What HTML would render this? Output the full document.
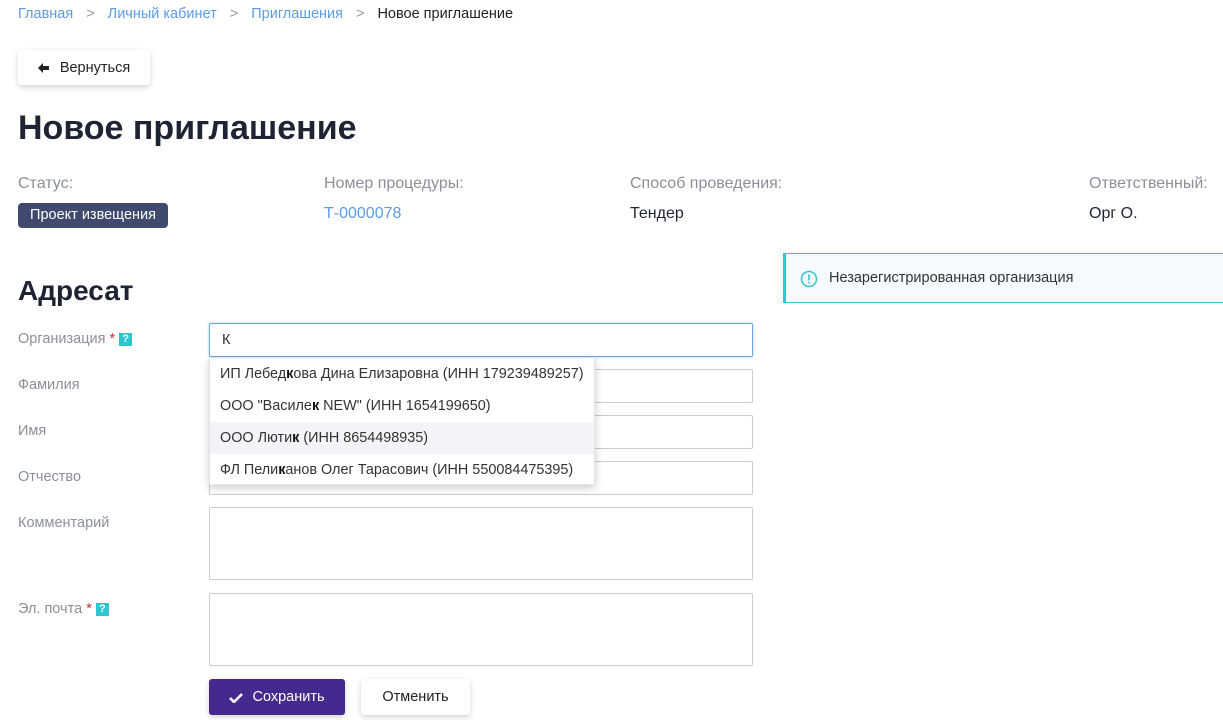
<!DOCTYPE html>
<html><head><meta charset="utf-8"><style>
*{box-sizing:border-box;margin:0;padding:0}
body{width:1223px;height:720px;overflow:hidden;background:#fff;font-family:"Liberation Sans",sans-serif;font-size:14px;color:#1e2433;position:relative}
.a{position:absolute;white-space:nowrap}
.bc{top:6px;left:18px;color:#5b9be6;font-size:14.5px}
.bc span.s{color:#999;margin:0 13px}
.bc span.c{color:#222}
.btn{position:absolute;background:#fff;border-radius:3px;box-shadow:0 2px 6px rgba(0,0,0,.18);display:flex;align-items:center;justify-content:center}
.lbl{color:#8a8f99;font-size:16px}
.fl{color:#8a8f99;font-size:14.5px}
.inp{position:absolute;left:209px;width:544px;border:1px solid #c8cbd2;border-radius:2px;background:#fff}
.q{display:inline-block;width:13px;height:13px;background:#2ec5cf;color:#fff;font-size:11px;font-weight:bold;text-align:center;line-height:13px;vertical-align:1px;margin-left:4px}
.st{color:#b33}
.dd{position:absolute;left:209px;top:357px;width:386px;height:128px;background:#fff;box-shadow:0 3px 8px rgba(0,0,0,.2);border:1px solid #e3e5ea}
.dd div{height:32px;line-height:32px;padding-left:10px;font-size:14.4px;color:#333}
.dd b{color:#111}
</style></head><body>
<div class="a bc">Главная<span class="s">&gt;</span>Личный кабинет<span class="s">&gt;</span>Приглашения<span class="s">&gt;</span><span class="c">Новое приглашение</span></div>
<div class="btn" style="left:18px;top:50px;width:132px;height:35px;font-size:14.5px;color:#222"><svg width="12" height="10" viewBox="0 0 12 10" style="margin-right:10px"><path d="M0 5L5 0V3H11V7H5V10Z" fill="#222"/></svg>Вернуться</div>
<div class="a" style="left:18px;top:109px;font-size:34px;font-weight:bold;color:#1e2433">Новое приглашение</div>
<div class="a lbl" style="left:18px;top:175px">Статус:</div>
<div class="a lbl" style="left:324px;top:175px">Номер процедуры:</div>
<div class="a lbl" style="left:630px;top:175px">Способ проведения:</div>
<div class="a lbl" style="left:1089px;top:175px">Ответственный:</div>
<div class="a" style="left:18px;top:203px;width:150px;height:25px;background:#3f4a6e;border-radius:4px;color:#fff;font-size:14.5px;text-align:center;line-height:25px">Проект извещения</div>
<div class="a" style="left:324px;top:205px;color:#5b9be6;font-size:16px">Т-0000078</div>
<div class="a" style="left:630px;top:205px;font-size:16px">Тендер</div>
<div class="a" style="left:1089px;top:205px;font-size:16px">Орг О.</div>
<div class="a" style="left:783px;top:253px;width:440px;height:50px;background:#f5fbfd;border-top:1px solid #33c5cc;border-bottom:1px solid #33c5cc;border-left:3px solid #2ec8d0"></div>
<svg class="a" style="left:800px;top:270px" width="18" height="18" viewBox="0 0 18 18"><circle cx="9" cy="9" r="7.5" fill="none" stroke="#33c5cc" stroke-width="1.5"/><rect x="8.2" y="4.5" width="1.6" height="6" fill="#33c5cc"/><rect x="8.2" y="11.8" width="1.6" height="1.6" fill="#33c5cc"/></svg>
<div class="a" style="left:829px;top:270px;font-size:14.5px;color:#333">Незарегистрированная организация</div>
<div class="a" style="left:18px;top:275px;font-size:28px;font-weight:bold;color:#1e2433">Адресат</div>
<div class="a fl" style="left:18px;top:331px">Организация <span class="st">*</span><span class="q">?</span></div>
<div class="a fl" style="left:18px;top:377px">Фамилия</div>
<div class="a fl" style="left:18px;top:423px">Имя</div>
<div class="a fl" style="left:18px;top:469px">Отчество</div>
<div class="a fl" style="left:18px;top:515px">Комментарий</div>
<div class="a fl" style="left:18px;top:601px">Эл. почта <span class="st">*</span><span class="q">?</span></div>
<div class="inp" style="top:323px;height:34px;border-color:#6aa6e8;box-shadow:0 0 3px rgba(90,150,230,.4);padding-left:12px;line-height:32px;font-size:14.5px;color:#333">К</div>
<div class="inp" style="top:369px;height:34px"></div>
<div class="inp" style="top:415px;height:34px"></div>
<div class="inp" style="top:461px;height:34px"></div>
<div class="inp" style="top:507px;height:73px"></div>
<div class="inp" style="top:593px;height:73px"></div>
<div class="dd">
<div>ИП Лебед<b>к</b>ова Дина Елизаровна (ИНН 179239489257)</div>
<div>ООО "Василе<b>к</b> NEW" (ИНН 1654199650)</div>
<div style="background:#f3f4f7">ООО Люти<b>к</b> (ИНН 8654498935)</div>
<div>ФЛ Пели<b>к</b>анов Олег Тарасович (ИНН 550084475395)</div>
</div>
<div class="btn" style="left:209px;top:679px;width:136px;height:36px;background:#46298e;color:#fff;font-size:14.5px"><svg width="14" height="11" viewBox="0 0 14 11" style="margin-right:9px"><path d="M1 6L5 10L13 2" fill="none" stroke="#fff" stroke-width="2.6"/></svg>Сохранить</div>
<div class="btn" style="left:361px;top:679px;width:109px;height:36px;color:#222;font-size:14.5px">Отменить</div>
</body></html>
